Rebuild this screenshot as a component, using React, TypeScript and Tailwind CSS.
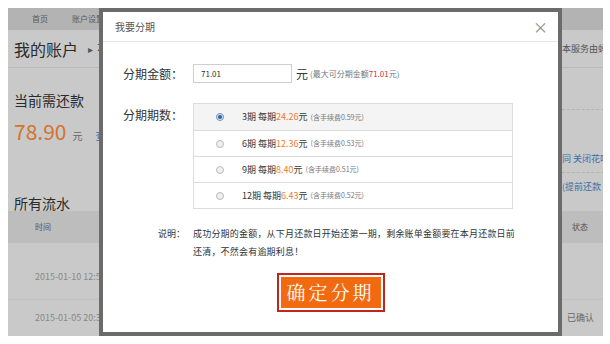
import React from 'react';

const font = { fontFamily: '"Noto Sans CJK SC", "Noto Sans", sans-serif' };

const options = [
  { n: '3期', per: '24.26', fee: '0.59', checked: true },
  { n: '6期', per: '12.36', fee: '0.53', checked: false },
  { n: '9期', per: '8.40', fee: '0.51', checked: false },
  { n: '12期', per: '6.43', fee: '0.52', checked: false },
];

const Radio = ({ checked }: { checked: boolean }) => (
  <span
    className={`flex h-[8px] w-[8px] items-center justify-center rounded-full border ${
      checked ? 'border-[#6b8fb8] bg-[#dfe9f4]' : 'border-[#b9b9b9] bg-[#f1f1f1]'
    }`}
  >
    {checked && <span className="h-[4px] w-[4px] rounded-full bg-[#2f5f96]" />}
  </span>
);

const InstallmentModal = () => (
  <div className="absolute left-[99px] top-[8px] flex h-[328px] w-[463px] flex-col border-4 border-[#6b6b6b] bg-white">
    {/* 标题栏 */}
    <div className="flex h-[30px] shrink-0 items-center justify-between border-b border-[#e6e6e6] pl-[12px] pr-[10px]">
      <span className="text-[10px] text-[#555]">我要分期</span>
      <span className="text-[15px] leading-none text-[#8a8a8a]">×</span>
    </div>

    {/* 分期金额 */}
    <div className="mt-[22px] flex items-center">
      <span className="w-[80px] text-right text-[12px] text-[#333]">分期金额：</span>
      <div className="ml-[10px] flex h-[19px] w-[99px] items-center border border-[#cfcfcf] pl-[7px] text-[8px] text-[#333]">
        71.01
      </div>
      <span className="ml-[4px] text-[12px] text-[#333]">元</span>
      <span className="ml-[2px] text-[8px] text-[#777]">
        (最大可分期金额<span className="text-[#d33]">71.01</span>元)
      </span>
    </div>

    {/* 分期期数 */}
    <div className="mt-[20px] flex items-start">
      <span className="mt-[3px] w-[80px] text-right text-[12px] text-[#333]">分期期数：</span>
      <div className="ml-[10px] flex w-[320px] flex-col border border-[#dcdcdc]">
        {options.map((o, i) => (
          <div
            key={o.n}
            className={`flex h-[26px] items-center ${i > 0 ? 'border-t border-[#dcdcdc]' : ''} ${
              o.checked ? 'bg-[#f4f4f4]' : 'bg-white'
            }`}
          >
            <span className="ml-[22px] flex w-[26px]">
              <Radio checked={o.checked} />
            </span>
            <span className="text-[9px] text-[#333]">
              {o.n} 每期<span className="text-[#f07b2a]">{o.per}</span>元
            </span>
            <span className="ml-[3px] text-[7px] text-[#777]">(含手续费{o.fee}元)</span>
          </div>
        ))}
      </div>
    </div>

    {/* 说明 */}
    <div className="mt-[16px] flex items-start">
      <span className="w-[82px] text-right text-[9px] leading-[18px] text-[#333]">说明：</span>
      <p className="ml-[8px] w-[340px] text-[9px] leading-[18px] tracking-[0.2px] text-[#333]">
        成功分期的金额，从下月还款日开始还第一期，剩余账单金额要在本月还款日前
        <br />
        还清，不然会有逾期利息！
      </p>
    </div>

    {/* 按钮 */}
    <div className="mt-[12px] flex justify-center">
      <div className="border-2 border-[#c3241c] bg-white p-[2px]">
        <button
          type="button"
          className="flex h-[31px] w-[100px] items-center justify-center bg-[#f26a0f] text-[19px] tracking-[3px] text-white"
          style={{ fontFamily: '"Noto Serif CJK SC", "Liberation Serif", "Noto Sans CJK SC", serif' }}
        >
          确定分期
        </button>
      </div>
    </div>
  </div>
);

export default function App() {
  return (
    <div className="relative h-[344px] w-[610px] overflow-hidden bg-white" style={font}>
      <div className="ml-[8px] mt-[8px] flex h-[328px] w-[595px] flex-col overflow-hidden bg-[#c9c9c9]">
        {/* 顶部导航 */}
        <div className="flex h-[22px] shrink-0 items-center gap-[24px] bg-[#b3b3b3] pl-[24px] text-[8px] text-[#5a5a5a]">
          <span>首页</span>
          <span>账户设置</span>
        </div>

        {/* 标题 */}
        <div className="flex h-[38px] shrink-0 items-center border-b border-[#bababa]">
          <div className="flex w-[554px] shrink-0 items-center pl-[6px]">
            <span className="text-[16px] text-[#2a2a2a]">我的账户</span>
            <span className="ml-[10px] text-[10px] text-[#555]">▸</span>
            <span className="ml-[4px] text-[12px] text-[#444]">花呗</span>
          </div>
          <span className="whitespace-nowrap text-[9px] text-[#555]">本服务由蚂蚁花呗提供</span>
        </div>

        <div className="flex">
          <div className="flex w-[554px] shrink-0 flex-col pl-[6px]">
            <span className="mt-[22px] text-[14px] leading-[20px] text-[#2a2a2a]">当前需还款</span>
            <div className="mt-[6px] flex items-baseline">
              <span className="text-[21px] text-[#d4732e]">78.90</span>
              <span className="ml-[6px] text-[10px] text-[#666]">元</span>
              <span className="ml-[13px] text-[10px] text-[#3a6ea5]">查看账单</span>
            </div>
            <span className="mt-[47px] text-[14px] leading-[16px] text-[#2a2a2a]">所有流水</span>
          </div>
          <div className="flex flex-col whitespace-nowrap text-[9px]">
            <div className="mt-[41px] border-t border-dashed border-[#b3b3b3]" />
            <span className="mt-[42px] text-[#3a6ea5]">同 关闭花呗</span>
            <div className="mt-[6px] border-t border-dashed border-[#b3b3b3]" />
            <span className="mt-[7px] text-[#3a6ea5]">(提前还款</span>
          </div>
        </div>

        {/* 表格 */}
        <div className="flex h-[32px] shrink-0 items-center bg-[#bdbdbd] text-[8px] text-[#555]">
          <span className="w-[564px] shrink-0 pl-[27px]">时间</span>
          <span>状态</span>
        </div>
        <div className="flex h-[57px] shrink-0 items-center border-b border-[#c0c0c0] pt-[13px] text-[9px] text-[#888]">
          <span className="w-[554px] shrink-0 pl-[27px]">2015-01-10 12:52</span>
        </div>
        <div className="flex flex-1 items-center text-[9px] text-[#888]">
          <span className="w-[559px] shrink-0 pl-[27px]">2015-01-05 20:33</span>
          <span className="whitespace-nowrap text-[#666]">已确认</span>
        </div>
      </div>

      <InstallmentModal />
    </div>
  );
}
